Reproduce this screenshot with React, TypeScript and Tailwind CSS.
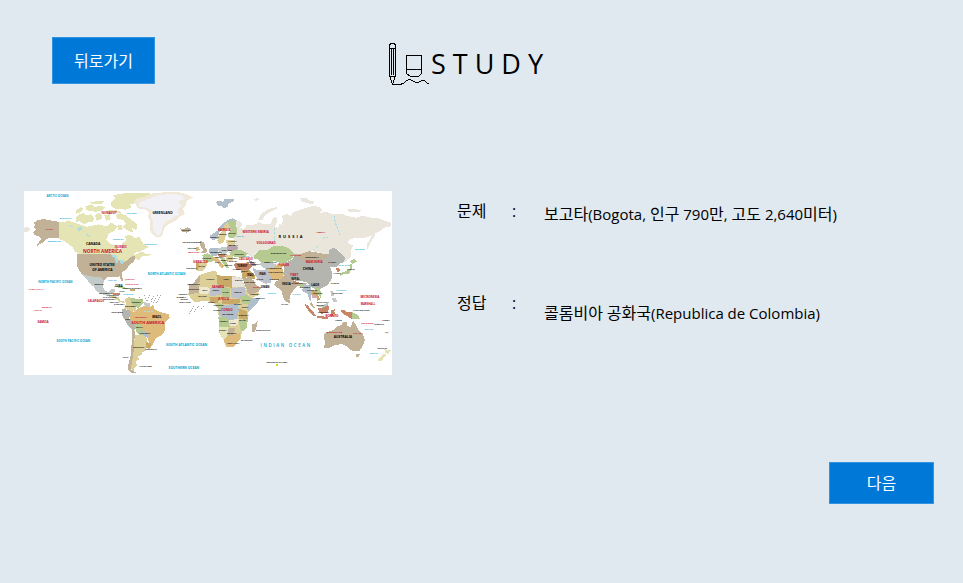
import React from "react";

type Shape = [fill: string, points: string];
type Label = [text: string, x: number, y: number, width: number];

const TAN = "#c1b196";
const OLIVE = "#e5e4b5";
const SAND = "#ddcf98";
const GOLD = "#debb7a";
const OCHRE = "#c9a967";
const GREEN = "#b4ca90";
const GREY = "#b4b5ae";
const STEEL = "#b1bfcb";
const SILVER = "#c3cbca";
const CREAM = "#ebe6dc";
const RUST = "#c68769";

const americas: Shape[] = [
  [OLIVE, "117,110 130,112 145,106 165,114 200,125 235,118 262,124 272,112 292,124 284,136 266,146 258,164 274,178 290,180 298,198 308,184 304,176 318,166 314,154 330,148 344,160 356,154 368,174 385,186 362,198 342,204 344,212 330,216 318,228 304,234 292,222 282,214 270,207 178,207 164,198 158,186 146,178 134,168 117,162"],
  [OLIVE, "344,212 356,202 370,200 376,206 392,208 384,214 366,212 356,226 346,222"],
  [OLIVE, "168,98 176,88 190,84 200,92 212,88 222,98 218,110 204,112 192,118 178,108 168,112"],
  [OLIVE, "168,76 182,66 190,72 180,82 168,86"],
  [OLIVE, "196,64 214,58 224,66 240,62 256,66 248,76 226,80 200,76"],
  [OLIVE, "224,90 236,84 246,90 244,102 230,108"],
  [OLIVE, "210,52 232,48 252,48 246,56 222,58"],
  [OLIVE, "272,52 286,38 276,32 300,26 340,24 392,24 376,36 360,42 350,54 330,58 334,68 316,74 282,70 272,62"],
  [OLIVE, "256,78 276,74 300,78 304,84 280,84 262,88"],
  [OLIVE, "252,90 268,88 272,102 258,108"],
  [OLIVE, "286,90 300,84 318,92 330,102 342,110 352,122 348,134 336,130 338,142 322,136 308,126 318,116 308,104 292,102"],
  [OLIVE, "290,122 304,120 308,132 296,136"],
  [TAN, "117,110 100,108 70,102 52,106 40,114 48,120 40,126 50,134 40,140 42,150 58,154 64,160 48,184 66,174 76,164 90,158 104,160 117,160"],
  [CREAM, "12,128 22,126 32,132 24,140 12,140"],
  ["#f0e9da", "342,50 352,40 376,34 392,26 430,22 466,20 494,26 518,38 500,46 496,62 488,72 494,86 480,94 464,108 444,118 432,130 424,154 412,158 398,150 388,132 390,112 384,96 386,82 374,72 352,70"],
  ["#f2f2f6", "356,54 384,42 410,32 450,26 482,30 494,40 476,50 482,64 472,76 476,88 458,98 440,108 428,120 422,146 412,152 400,138 398,112 392,92 394,76 376,66 358,66"],
  [TAN, "480,130 492,132 502,127 514,134 500,143 484,139"],
  [TAN, "172,207 270,207 282,214 304,234 318,228 330,216 344,212 346,222 338,232 326,240 320,252 304,262 306,274 310,288 302,286 298,274 276,276 262,276 252,286 240,276 224,276 204,272 184,266 172,246 170,226"],
  [SILVER, "184,266 204,272 224,276 240,276 252,286 248,302 254,318 266,320 276,310 286,312 282,322 272,326 262,332 240,326 228,316 218,300 208,288"],
  [SILVER, "190,270 198,272 214,294 222,302 216,302 204,288"],
  [RUST, "270,322 300,324 300,330 280,330"],
  [SAND, "262,332 280,332 296,336 300,346 316,350 314,355 298,350 284,340"],
  [GREEN, "282,304 304,302 322,310 312,312"],
  [OCHRE, "328,312 346,312 344,318 330,318"],
  [SAND, "314,342 326,336 334,350 348,364 346,380 330,376 312,370 318,356"],
  [GREEN, "326,336 346,340 368,342 368,356 352,370 344,362 334,352"],
  [SILVER, "368,350 388,354 390,366 376,366"],
  [GREY, "306,370 330,376 332,390 326,400 342,414 346,432 338,436 322,420 314,404 304,388"],
  [GOLD, "330,378 346,380 352,370 372,362 392,366 398,358 404,374 420,380 446,388 448,398 434,412 434,436 424,450 408,458 400,474 388,492 378,486 386,472 380,454 364,438 362,424 342,418 328,402 332,390"],
  [GREEN, "342,412 362,416 364,432 378,442 370,448 358,448 348,440"],
  [STEEL, "362,436 378,440 386,452 384,458 372,452"],
  [TAN, "336,432 346,438 342,470 340,500 336,526 332,552 350,564 334,564 322,552 326,530 332,510 334,478"],
  [SAND, "346,448 370,450 382,460 380,478 376,488 378,496 366,500 366,508 354,514 356,522 346,530 350,540 342,548 342,560 332,550 336,526 340,500 342,470"],
  [OCHRE, "378,470 392,474 390,490 378,488"],
];

const eurasia: Shape[] = [
  [CREAM, "92,108 104,108 112,120 104,128 116,132 124,120 150,118 160,110 176,118 196,116 202,100 212,94 216,108 208,126 218,128 224,114 230,122 232,104 230,92 244,86 256,92 262,82 290,72 308,66 326,62 342,66 350,76 340,84 362,80 384,88 408,86 430,94 452,98 470,92 496,98 520,100 556,114 556,124 536,128 526,136 510,144 504,158 494,172 486,194 484,178 494,160 500,150 480,158 454,158 436,162 426,172 442,182 436,198 436,214 418,232 410,216 400,194 380,190 372,206 350,206 334,200 310,198 286,206 266,206 250,190 232,182 206,182 188,194 160,196 146,208 148,222 132,212 120,202 96,194 92,172 84,160 96,142"],
  [CREAM, "158,104 166,88 186,74 212,66 216,70 194,80 178,92 172,104"],
  [CREAM, "284,40 300,38 312,46 326,50 322,58 302,54 290,50"],
  [CREAM, "426,73 446,72 468,76 462,82 430,80"],
  [CREAM, "144,42 158,39 160,44 150,48"],
  [STEEL, "32,50 48,46 52,52 58,42 86,42 84,50 70,56 66,66 56,70 46,62 38,62"],
  [STEEL, "14,152 26,144 38,136 44,124 54,114 68,104 82,100 96,106 90,112 72,110 60,118 50,134 40,144 38,160 20,166"],
  [SAND, "40,152 50,138 56,122 68,110 76,124 62,140 62,152 54,172 42,178 36,166"],
  [GREEN, "68,112 82,106 92,112 96,148 86,158 70,158 66,150 76,134"],
  [GREEN, "146,210 160,196 188,194 206,182 232,182 250,190 266,206 260,222 244,230 236,236 206,228 188,234 170,236 158,222 146,220"],
  [SILVER, "162,234 176,234 200,232 214,240 206,248 180,250 168,244"],
  [GOLD, "188,252 208,246 216,236 240,238 230,248 236,266 228,280 216,286 198,284 186,274"],
  [GREY, "240,232 262,222 268,208 286,222 318,236 350,226 372,206 370,194 386,188 400,198 418,216 416,230 402,236 392,246 374,246 380,262 378,282 366,300 346,310 330,312 314,304 304,290 280,288 256,284 236,268 234,248"],
  [TAN, "264,206 286,206 310,198 334,202 354,206 372,208 350,226 320,236 288,224"],
  [TAN, "210,290 228,280 238,266 250,280 280,292 304,294 298,302 276,304 262,318 254,332 250,350 242,352 232,334 228,316 206,300"],
  [RUST, "262,288 280,290 278,296 262,294"],
  [GREEN, "284,298 294,298 292,308 284,306"],
  [STEEL, "294,296 312,302 320,318 316,340 318,352 310,340 306,326 290,318"],
  [OCHRE, "318,314 330,318 344,324 338,330 344,344 336,346 330,330 320,330"],
  [GREEN, "322,306 340,308 348,324 346,340 340,330 330,316"],
  ["#d9a7b2", "318,328 332,328 334,340 320,338"],
  [TAN, "248,344 254,346 254,354 248,354"],
  [TAN, "312,354 318,352 328,368 322,368"],
  [RUST, "296,356 306,360 318,374 332,392 326,394 308,376"],
  [RUST, "334,392 356,394 370,398 364,402 336,398"],
  [RUST, "338,368 346,370 366,360 372,368 366,382 348,386 340,380"],
  [SILVER, "338,364 354,360 364,352 368,358 352,368"],
  [RUST, "376,376 392,370 386,378 392,390 384,386 378,396"],
  [RUST, "404,374 416,374 424,380 438,380 438,402 424,392 410,384"],
  [GREEN, "438,380 454,388 466,402 456,402 438,402"],
  [SILVER, "374,316 382,318 386,332 378,332"],
  [SILVER, "380,340 392,338 394,350 382,352"],
  [GREEN, "404,264 420,258 432,250 434,238 440,238 438,254 430,266 414,268 404,272"],
  [GREEN, "432,228 446,222 454,230 440,236"],
  [RUST, "392,248 400,248 404,258 394,262"],
  [TAN, "354,450 360,442 384,434 396,422 408,420 412,410 426,410 424,420 436,426 442,406 450,418 458,434 472,448 478,464 470,484 462,496 446,498 432,492 426,484 410,476 388,480 368,490 356,488 358,470"],
  [TAN, "450,506 464,506 458,516 452,514"],
  [OLIVE, "536,490 550,496 556,494 548,506 538,502"],
  [OLIVE, "534,506 542,508 528,526 514,528 522,518"],
];

const europeAfrica: Shape[] = [
  [TAN, "60,76 72,82 74,96 82,104 78,112 62,114 68,104 60,92"],
  [GOLD, "46,96 56,94 58,104 48,108"],
  [GREEN, "66,120 82,114 98,122 98,138 88,142 70,136"],
  [SAND, "48,142 82,142 76,158 66,168 50,166"],
  [OCHRE, "48,144 56,144 54,166 46,164"],
  [STEEL, "88,98 112,98 116,120 98,124 86,112"],
  [SILVER, "112,98 140,96 142,110 134,118 116,114"],
  ["#b6a5ae", "138,92 160,88 174,98 168,106 142,108"],
  [SAND, "136,74 164,74 166,88 140,90"],
  [GREEN, "146,112 160,106 180,104 204,116 188,128 164,126 150,120"],
  [GOLD, "96,126 112,126 120,140 132,152 124,160 112,144 98,136"],
  [RUST, "112,118 138,116 138,124 116,126"],
  [SAND, "134,118 156,120 160,136 140,140"],
  [GREEN, "118,128 132,128 142,148 146,160 134,156"],
  [RUST, "160,146 178,142 206,144 214,154 206,164 168,164"],
  ["#b094a0", "204,134 222,142 228,152 212,152"],
  [OCHRE, "182,166 206,164 224,182 222,194 200,186 186,190"],
  [TAN, "186,190 204,186 220,196 228,210 242,218 232,234 208,244 198,222"],
  [SAND, "204,240 232,230 238,238 212,250"],
  ["#bcc1cb", "216,158 232,166 262,162 270,180 272,202 256,206 238,198 226,184"],
  [SAND, "36,208 48,192 58,180 80,172 106,166 112,180 136,186 158,182 184,188 196,220 206,242 222,250 240,248 228,268 204,290 202,318 198,340 184,350 182,370 160,394 138,396 130,376 116,350 116,310 112,280 98,262 72,256 44,262 24,240 26,222"],
  [TAN, "36,208 48,192 58,182 60,198 46,212"],
  [TAN, "26,208 48,206 58,216 56,234 26,236"],
  [SAND, "58,182 106,166 112,202 88,220 60,202"],
  [OCHRE, "108,180 154,184 154,218 112,210"],
  ["#e9e4db", "154,184 182,188 194,216 154,216"],
  ["#f0e9d2", "56,214 80,216 90,222 84,236 58,238"],
  ["#bcc1cb", "88,220 112,208 124,216 122,240 90,242"],
  [GREEN, "122,214 150,220 150,248 124,246"],
  ["#bcc1cb", "152,218 192,216 196,242 178,252 152,246"],
  [OCHRE, "86,244 120,244 112,262 92,264"],
  [OCHRE, "124,252 178,252 180,264 150,268 124,266"],
  [GREEN, "180,244 200,240 220,254 204,268 182,264"],
  [STEEL, "212,250 240,248 228,268 202,290 200,274"],
  [STEEL, "118,270 172,266 176,284 168,314 144,314 116,300"],
  [GREEN, "110,264 128,266 124,280 114,282"],
  [OCHRE, "174,280 200,288 202,316 176,310"],
  [GREEN, "114,304 144,308 148,334 116,334"],
  ["#f0e9d2", "146,316 176,310 172,330 148,334"],
  [GREEN, "176,314 202,312 200,338 184,350 178,334"],
  [OLIVE, "116,334 144,336 140,366 130,374 118,350"],
  [TAN, "142,340 164,338 160,360 142,362"],
  [GOLD, "130,374 142,362 164,358 180,352 180,370 160,394 138,396"],
  [TAN, "214,328 226,324 232,316 230,332 222,352 214,350"],
];

const water: Shape[] = [
  ["#a9dde6", "170,130 184,124 188,132 176,138"],
  ["#a9dde6", "144,118 158,124 160,128 146,122"],
  ["#a9dde6", "198,146 212,152 210,156 198,150"],
  ["#a9dde6", "274,208 292,212 288,218 276,216"],
  ["#a9dde6", "284,220 292,220 294,232 288,234"],
  ["#a9dde6", "296,224 310,226 308,238 300,234"],
  ["#ffffff", "268,150 290,142 312,152 314,164 302,174 296,186 290,178 270,174 260,164"],
];

const countries: Label[] = [
  ["GREENLAND", 398, 88, 58], ["CANADA", 196, 181, 46], ["UNITED STATES", 203, 244, 86], ["OF AMERICA", 213, 257, 68],
  ["MEXICO", 224, 301, 26], ["CUBA", 286, 306, 20], ["DOMINICAN REPUBLIC", 306, 311, 62], ["HAITI", 296, 319, 18],
  ["GUATEMALA", 238, 325, 34], ["HONDURAS", 264, 331, 30], ["EL SALVADOR", 248, 337, 42], ["NICARAGUA", 250, 345, 36], ["COSTA RICA", 266, 352, 34], ["PANAMA", 284, 360, 26],
  ["VENEZUELA", 332, 352, 32], ["COLOMBIA", 316, 364, 30], ["ECUADOR", 276, 384, 30], ["PERU", 314, 404, 16], ["BRAZIL", 394, 399, 32], ["BOLIVIA", 346, 429, 24],
  ["PARAGUAY", 358, 447, 32], ["ARGENTINA", 336, 489, 38], ["URUGUAY", 378, 493, 30], ["CHILE", 306, 519, 20], ["FALKLAND", 358, 545, 36],
  ["ICELAND", 484, 137, 28], ["UNITED KINGDOM", 488, 175, 52], ["IRELAND", 502, 193, 26], ["FRANCE", 546, 221, 26], ["PORTUGAL", 498, 251, 32], ["SPAIN", 534, 247, 20],
  ["NORWAY", 570, 159, 24], ["SWEDEN", 594, 150, 24], ["FINLAND", 622, 147, 24], ["LATVIA", 624, 170, 26], ["POLAND", 606, 197, 26], ["BELARUS", 624, 184, 28],
  ["GERMANY", 572, 204, 30], ["CZECH REP.", 592, 211, 32], ["AUSTRIA", 582, 218, 28], ["UKRAINE", 642, 211, 28], ["ROMANIA", 622, 223, 28], ["SERBIA", 600, 227, 22], ["ITALY", 582, 235, 20], ["BULGARIA", 624, 231, 28], ["GREECE", 612, 242, 24],
  ["TURKEY", 650, 247, 32], ["SYRIA", 662, 262, 22], ["IRAQ", 680, 272, 20], ["IRAN", 716, 271, 20], ["GEORGIA", 678, 233, 28], ["ARMENIA", 690, 240, 28], ["CYPRUS", 638, 256, 22],
  ["KAZAKHSTAN", 752, 207, 44], ["UZBEKISTAN", 730, 234, 38], ["TURKMENISTAN", 736, 252, 46], ["AFGHANISTAN", 744, 264, 42], ["PAKISTAN", 746, 284, 32], ["MONGOLIA", 858, 219, 34], ["CHINA", 846, 256, 34],
  ["INDIA", 784, 300, 28], ["NEPAL", 812, 284, 26], ["BANGLADESH", 815, 297, 32], ["MYANMAR", 840, 309, 28], ["LAOS", 872, 302, 24], ["THAILAND", 860, 318, 30], ["VIETNAM", 878, 326, 28], ["SRI LANKA", 780, 359, 26], ["MALAYSIA", 890, 354, 34], ["INDONESIA", 890, 382, 38],
  ["PHILIPPINES", 934, 325, 34], ["TAIWAN", 932, 298, 22], ["JAPAN", 980, 256, 22], ["N. KOREA", 922, 234, 26], ["S. KOREA", 938, 267, 24], ["BRUNEI", 888, 362, 22], ["PAPUA NEW GUINEA", 998, 378, 50],
  ["AUSTRALIA", 938, 458, 58], ["TIMOR", 944, 407, 20], ["VANUATU", 1062, 420, 26], ["FIJI", 1090, 442, 16], ["NEW ZEALAND", 1070, 491, 30], ["SAMOA", 1086, 408, 20],
  ["MOROCCO", 504, 299, 32], ["ALGERIA", 556, 285, 28], ["LIBYA", 608, 286, 20], ["EGYPT", 644, 287, 22], ["MAURITANIA", 504, 314, 34], ["MALI", 546, 316, 16], ["NIGER", 576, 318, 20], ["CHAD", 608, 324, 16], ["SUDAN", 642, 322, 20],
  ["SENEGAL", 476, 329, 26], ["GAMBIA", 470, 337, 26], ["GUINEA", 480, 345, 24], ["SIERRA LEONE", 476, 353, 36], ["NIGERIA", 562, 352, 22], ["GHANA", 536, 336, 22], ["CAMEROON", 580, 361, 28], ["ETHIOPIA", 664, 346, 28], ["SOMALIA", 706, 340, 28],
  ["KENYA", 664, 368, 20], ["UGANDA", 642, 360, 20], ["GABON", 580, 378, 20], ["DR CONGO", 608, 390, 30], ["TANZANIA", 654, 393, 30], ["ANGOLA", 598, 409, 24], ["ZAMBIA", 628, 415, 20], ["MALAWI", 656, 407, 20], ["NAMIBIA", 596, 438, 22], ["BOTSWANA", 620, 445, 28],
  ["SOUTH AFRICA", 620, 476, 38], ["MADAGASCAR", 708, 437, 40], ["MAURITIUS", 662, 467, 34], ["SAUDI ARABIA", 670, 294, 36], ["OMAN", 724, 308, 20], ["YEMEN", 690, 328, 24], ["QATAR", 708, 285, 20], ["KERGUELEN ISLANDS", 736, 534, 66],
];

const regions: Label[] = [
  ["ALASKA", 76, 136, 24], ["NUNAVUT", 246, 88, 42], ["QUEBEC", 280, 188, 44], ["HAWAII (U.S.A.)", 22, 313, 54], ["KIRIBATI", 62, 367, 36], ["TOKELAU", 42, 376, 24], ["SAMOA", 50, 414, 38], ["GALAPAGOS", 204, 349, 46],
  ["PUERTO RICO", 312, 300, 46], ["JAMAICA", 312, 285, 34], ["AMAZONIA", 344, 397, 36], ["KARELIA", 590, 137, 44], ["WESTERN SIBERIA", 662, 145, 88], ["SIBERIA", 884, 145, 34], ["VOLGOGRAD", 712, 177, 50], ["XINJIANG", 808, 214, 36], ["CAUCASUS", 654, 224, 44],
  ["GIBRALTAR", 516, 233, 48], ["BRITTANY", 504, 203, 34], ["PUNJAB", 774, 243, 32], ["MANCHURIA", 858, 234, 46], ["TIBET", 806, 273, 30], ["ARABIA", 696, 308, 24], ["SAHARA", 565, 307, 56], ["AFRICA", 584, 345, 52],
  ["CONGO", 604, 378, 32], ["MICRONESIA", 1020, 339, 56], ["MARSHALL", 1020, 358, 44], ["SOLOMON", 1024, 415, 32], ["BORNEO", 912, 394, 44], ["QUEENSLAND", 918, 444, 48], ["CAPE YORK", 998, 446, 28],
];

const seas: Label[] = [
  ["ARCTIC OCEAN", 76, 37, 72], ["BEAUFORT SEA", 116, 103, 42], ["BAFFIN BAY", 320, 88, 32], ["BERING SEA", 80, 172, 48], ["HUDSON BAY", 278, 164, 32], ["LABRADOR SEA", 374, 181, 36], ["NORTH PACIFIC OCEAN", 50, 295, 112], ["NORTH ATLANTIC OCEAN", 378, 270, 122],
  ["GULF OF", 264, 288, 26], ["CARIBBEAN SEA", 306, 328, 38], ["SOUTH PACIFIC OCEAN", 104, 471, 112], ["SOUTH ATLANTIC OCEAN", 436, 483, 126], ["SOUTHERN OCEAN", 445, 551, 92], ["BLACK SEA", 664, 216, 26], ["NORTH SEA", 648, 157, 22], ["ARABIAN SEA", 738, 325, 32], ["BAY OF BENGAL", 816, 329, 26],
  ["SEA OF JAPAN", 952, 244, 38], ["OKHOTSK", 1004, 194, 28], ["PHILIPPINE SEA", 944, 316, 36], ["CORAL SEA", 1030, 433, 30], ["TASMAN SEA", 1046, 505, 26],
];

const headings: Label[] = [["NORTH AMERICA", 182, 204, 130], ["SOUTH AMERICA", 334, 416, 98]];

function Land({ shapes }: { shapes: Shape[] }) {
  return (
    <>
      {shapes.map(([fill, points]) => (
        <polygon key={points} fill={fill} points={points} />
      ))}
    </>
  );
}

// Each name is set at the size at which it spans about its given width, up to a largest size.
function Names({ items, max, className }: { items: Label[]; max: number; className: string }) {
  return (
    <g className={className}>
      {items.map(([text, x, y, width]) => (
        <text key={text} x={x + width / 2} y={y} textAnchor="middle" fontSize={Math.min(max, Math.round(width / (text.length * 0.65)))}>
          {text}
        </text>
      ))}
    </g>
  );
}

function WorldMap() {
  return (
    <svg viewBox="12 18 1102 552" className="block h-auto w-full bg-white" role="img" aria-label="세계 지도">
      <g shapeRendering="crispEdges">
        <Land shapes={americas} />
        <Land shapes={water} />
        <g transform="translate(555 0)">
          <Land shapes={eurasia} />
        </g>
        <g transform="translate(480 90)">
          <Land shapes={europeAfrica} />
        </g>
        <path d="M940 92l4 20 14 36M906 160l18-4M880 196l14-14M762 130v44M370 380h28M655 355v14" fill="none" stroke="#a9dde6" strokeWidth="3" strokeDasharray="7 4" />
        <rect x="767" y="537" width="7" height="4" fill="#d8d820" />
        <path d="M356 336l12 12M372 330l8 16M388 328l-6 22M400 332l-8 18M412 330l-14 26M424 328l-14 24M508 386l14-26M522 380l14-20M540 372l12-12" fill="none" stroke="#777777" strokeWidth="2" strokeDasharray="4 4" />
      </g>
      <Names items={seas} max={10} className="fill-[#00a5cf] font-bold" />
      <Names items={countries} max={10} className="fill-black font-bold" />
      <Names items={regions} max={9} className="fill-[#c8102e] font-bold" />
      <Names items={headings} max={14} className="fill-[#c8102e] font-bold" />
      <text x="774" y="158" className="fill-black text-[12px] font-bold tracking-[6px]">RUSSIA</text>
      <text x="720" y="485" className="fill-[#00a5cf] text-[13px] font-semibold tracking-[5px]">INDIAN OCEAN</text>
    </svg>
  );
}

function Logo() {
  return (
    <div className="flex items-start">
      <svg width="43" height="46" viewBox="0 0 43 46" fill="none" stroke="black" shapeRendering="crispEdges" aria-hidden="true">
        <path d="M1.500 36V5.500l1-2h4l1 2V36M1.500 8.500h6M3.500 9v26M5.500 9v26M1.500 36l3 8 3-8M1.500 36.500h6" />
        <path d="M18.500 15.500h15v18l-3 3h-8l-4-3zM18.500 29.500h15" />
        <path d="M4.500 44.500h7l4-1 3-3 3-1 3 1 3 2h3l3-2h3l2 2 3 2" />
      </svg>
      <h1 className="mt-1.5 text-[27px] leading-9 font-normal">S T U D Y</h1>
    </div>
  );
}

// Latin letters and figures are set one size below the Hangul beside them.
function MixedText({ text }: { text: string }) {
  return (
    <>
      {text.split(/([^\uac00-\ud7a3]+)/).map((part, i) =>
        i % 2 ? (
          <span key={i} className="text-[15px]">
            {part}
          </span>
        ) : (
          part
        ),
      )}
    </>
  );
}

function Row({ label, value, valueClass }: { label: string; value: string; valueClass: string }) {
  return (
    <div className="flex items-start">
      <dt className="flex w-[87px] shrink-0">
        <span className="w-[55px]">{label}</span>
        <span>:</span>
      </dt>
      <dd className={valueClass}>
        <MixedText text={value} />
      </dd>
    </div>
  );
}

function Button({ children, className }: { children: React.ReactNode; className: string }) {
  return (
    <button type="button" className={`border border-[#3393df] bg-[#0078d7] text-white ${className}`}>
      {children}
    </button>
  );
}

export default function App() {
  return (
    <div className="min-h-screen bg-[#dfe9ef] font-['Open_Sans','Noto_Sans_CJK_KR',sans-serif] text-base leading-6 text-black">
      <header className="grid grid-cols-[1fr_auto_1fr] items-start pt-[37px] pr-[84px] pl-[52px]">
        <Button className="h-[47px] w-[103px]">뒤로가기</Button>
        <div className="pt-[3px]">
          <Logo />
        </div>
      </header>
      <main className="mt-[105px] flex items-start gap-[65px] px-6">
        <div className="w-[368px] shrink-0">
          <WorldMap />
        </div>
        <dl className="flex flex-1 flex-col gap-[65px] pt-2">
          <Row label="문제" value="보고타(Bogota, 인구 790만, 고도 2,640미터)" valueClass="pt-[3px]" />
          <Row label="정답" value="콜롬비아 공화국(Republica de Colombia)" valueClass="pt-[10px]" />
        </dl>
      </main>
      <footer className="mt-[87px] flex justify-end pr-[29px]">
        <Button className="h-[42px] w-[105px]">다음</Button>
      </footer>
    </div>
  );
}
